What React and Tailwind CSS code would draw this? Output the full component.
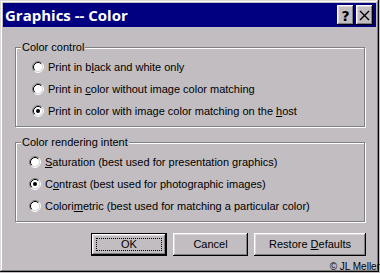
import React from 'react';

const FONT = { fontFamily: '"Liberation Sans", Arial, sans-serif' };

function Radio({ checked }) {
  return (
    <svg width="12" height="12" viewBox="0 0 12 12" className="shrink-0">
      <circle cx="6" cy="6" r="4.5" fill="#fff" />
      <path d="M2.11 9.89 A5.5 5.5 0 0 1 9.89 2.11" fill="none" stroke="#808080" strokeWidth="1" />
      <path d="M9.89 2.11 A5.5 5.5 0 0 1 2.11 9.89" fill="none" stroke="#fff" strokeWidth="1" />
      <path d="M2.82 9.18 A4.5 4.5 0 0 1 9.18 2.82" fill="none" stroke="#000" strokeWidth="1" />
      <path d="M9.18 2.82 A4.5 4.5 0 0 1 2.82 9.18" fill="none" stroke="#dcd8dc" strokeWidth="1" />
      {checked && <circle cx="6" cy="6" r="2" fill="#000" />}
    </svg>
  );
}

function Option({ checked, children, gap }) {
  return (
    <div className={`flex items-center h-[22px] ${gap}`}>
      <Radio checked={checked} />
      <span className="text-[11px] leading-[13px] text-black">{children}</span>
    </div>
  );
}

function Group({ title, className = '', pad, children }) {
  return (
    <fieldset
      className={`ml-[12px] w-[350px] border border-[#808080] shadow-[inset_1px_1px_0_#fff,1px_1px_0_#fff] ${className}`}
    >
      <legend className="ml-[5px] px-[1px] bg-[#c1bdc1] text-[11px] leading-[13px] text-black">
        {title}
      </legend>
      <div className={`pt-[2px] pb-[4px] ${pad}`}>{children}</div>
    </fieldset>
  );
}

const bevel =
  'shadow-[inset_-1px_-1px_0_#000,inset_1px_1px_0_#fff,inset_-2px_-2px_0_#808080,inset_2px_2px_0_#dcd8dc]';

export default function App() {
  return (
    <div className="relative w-[380px] h-[273px] bg-[#c1bdc1] overflow-hidden" style={FONT}>
      <div
        className="w-[379px] h-[272px] p-[3px] bg-[#c1bdc1] shadow-[inset_-1px_-1px_0_#000,inset_1px_1px_0_#dcd8dc,inset_-2px_-2px_0_#808080,inset_2px_2px_0_#fff]"
      >
        {/* title bar */}
        <div className="flex items-center justify-between h-[24px] bg-[#000080] pl-[2px] pr-[3px]">
          <span
            className="text-white font-bold text-[15px] leading-none"
            style={{ fontFamily: '"Open Sans", "DejaVu Sans", sans-serif' }}
          >
            Graphics -- Color
          </span>
          <div className="flex gap-[2px]">
            <div className={`w-[17px] h-[20px] bg-[#c1bdc1] ${bevel} flex items-center justify-center`}>
              <span
                className="font-bold text-[14px] leading-none text-black pt-[1px]"
                style={{ fontFamily: '"DejaVu Sans", sans-serif' }}
              >
                ?
              </span>
            </div>
            <div className={`w-[17px] h-[20px] bg-[#c1bdc1] ${bevel} flex items-center justify-center`}>
              <svg width="11" height="11" viewBox="0 0 11 11">
                <path d="M1 1 L10 10 M10 1 L1 10" stroke="#000" strokeWidth="1.4" />
              </svg>
            </div>
          </div>
        </div>

        {/* color control */}
        <Group title="Color control" className="mt-[14px]" pad="pl-[16px]">
          <Option gap="gap-[4px]">
            Print in b<u>l</u>ack and white only
          </Option>
          <Option gap="gap-[4px]">
            Print in <u>c</u>olor without image color matching
          </Option>
          <Option checked gap="gap-[4px]">
            Print in color with image color matching on the <u>h</u>ost
          </Option>
        </Group>

        {/* rendering intent */}
        <Group title="Color rendering intent" className="mt-[9px]" pad="pl-[13px]">
          <Option gap="gap-[4px]">
            <u>S</u>aturation (best used for presentation graphics)
          </Option>
          <Option checked gap="gap-[4px]">
            C<u>o</u>ntrast (best used for photographic images)
          </Option>
          <Option gap="gap-[4px]">
            Colori<u>m</u>etric (best used for matching a particular color)
          </Option>
        </Group>

        {/* buttons */}
        <div className="flex justify-end gap-[6px] mt-[11px] pr-[10px] text-[11px] text-black">
          <div className={`w-[76px] h-[23px] border border-black bg-[#c1bdc1] ${bevel} p-[4px] flex`}>
            <div className="flex-1 border border-dotted border-black flex items-center justify-center">
              <span>OK</span>
            </div>
          </div>
          <div className={`w-[75px] h-[23px] bg-[#c1bdc1] ${bevel} flex items-center justify-center`}>
            <span>Cancel</span>
          </div>
          <div className={`w-[112px] h-[23px] bg-[#c1bdc1] ${bevel} flex items-center justify-center`}>
            <span>
              Restore <u>D</u>efaults
            </span>
          </div>
        </div>
      </div>

      {/* watermark */}
      <span className="absolute right-[0px] bottom-[1px] text-[10px] leading-none text-black">
        © JL Meller
      </span>
    </div>
  );
}
